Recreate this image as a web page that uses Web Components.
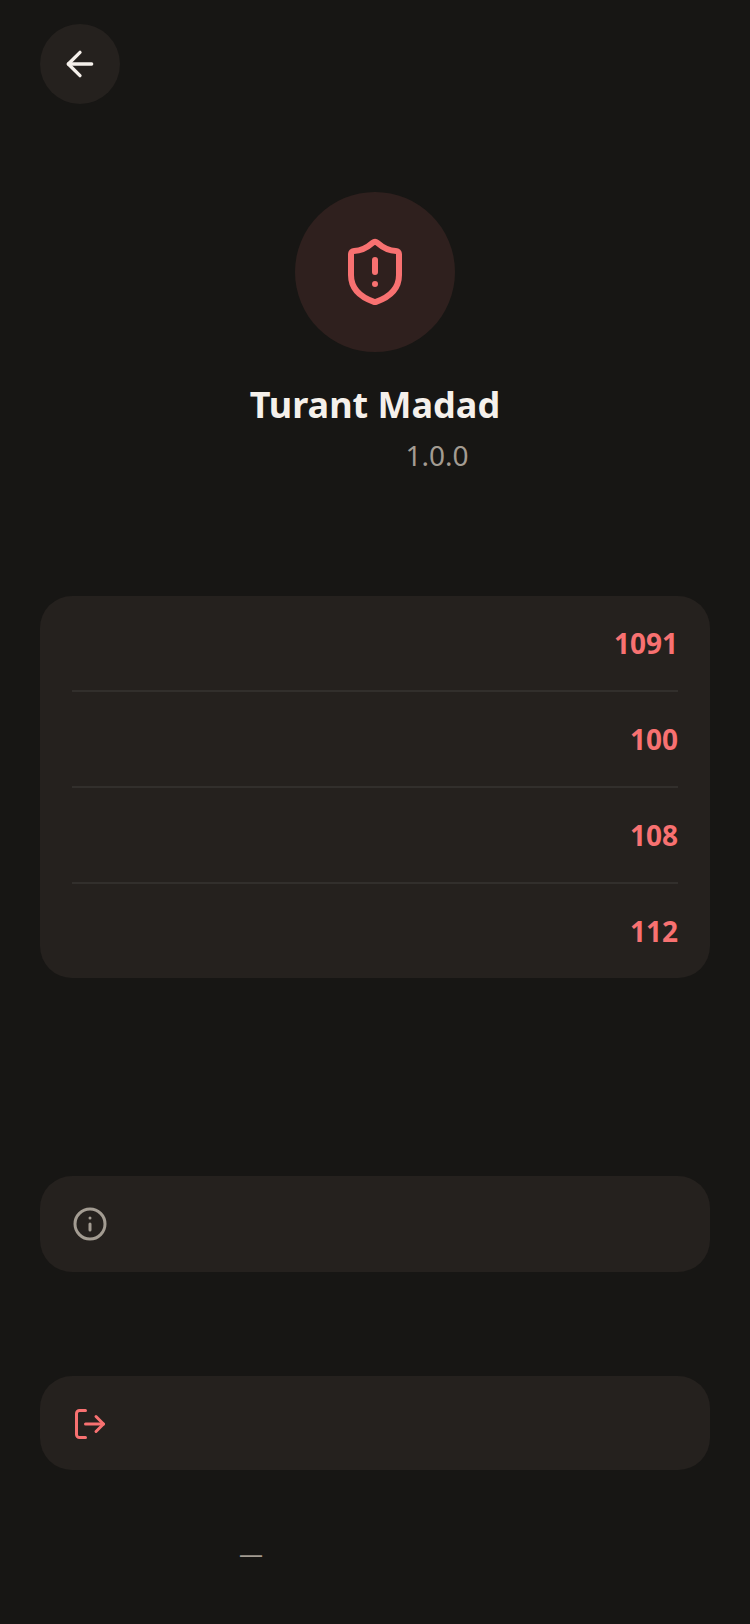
<!DOCTYPE html>
<html lang="en">
<head>
<meta charset="UTF-8">
<meta name="viewport" content="width=device-width, initial-scale=1">
<title>Turant Madad</title>
<style>
  body {
    margin: 0;
    background: #171614;
  }
</style>
</head>
<body>
<about-screen></about-screen>

<script>
/*
 * Line icons, all on a 24 unit grid
 */
const ICONS = {
  back: '<path d="m12 19-7-7 7-7"/><path d="M19 12H5"/>',
  shield: '<path d="M20 13c0 5-3.5 7.5-7.66 8.95a1 1 0 0 1-.67-.01C7.5 20.5 4 18 4 13V6a1 1 0 0 1 1-1c2 0 4.5-1.2 6.24-2.72a1.17 1.17 0 0 1 1.52 0C14.51 3.81 17 5 19 5a1 1 0 0 1 1 1z"/><path d="M12 8v4"/><path d="M12 16h.01"/>',
  info: '<circle cx="12" cy="12" r="10"/><path d="M12 16v-4"/><path d="M12 8h.01"/>',
  logout: '<path d="M9 21H5a2 2 0 0 1-2-2V5a2 2 0 0 1 2-2h4"/><path d="m16 17 5-5-5-5"/><path d="M21 12H9"/>'
};

class LineIcon extends HTMLElement {
  constructor(){
    super();
    this.attachShadow({mode: 'open'});
  }

  connectedCallback(){
    this.shadowRoot.innerHTML = `
    <style>
      :host { display: block; width: var(--icon-size, 36px); height: var(--icon-size, 36px); }
      svg { display: block; width: 100%; height: 100%; }
    </style>
    <svg viewBox="0 0 24 24" fill="none" stroke="currentColor" stroke-width="2"
      stroke-linecap="round" stroke-linejoin="round" aria-hidden="true">${ICONS[this.getAttribute('name')]}</svg>
    `;
  }
}

//Round back button in the top bar
class BackButton extends HTMLElement {
  constructor(){
    super();
    this.attachShadow({mode: 'open'});
  }

  connectedCallback(){
    this.shadowRoot.innerHTML = `
    <style>
      :host { display: block; --icon-size: 40px; }
      button {
        display: grid;
        place-items: center;
        width: 80px;
        height: 80px;
        padding: 0;
        border: none;
        border-radius: 50%;
        background: #25211e;
        color: #f5f0eb;
        cursor: pointer;
      }
    </style>
    <button type="button" aria-label="Back"><line-icon name="back"></line-icon></button>
    `;
    this.shadowRoot.querySelector("button").addEventListener("click", () => history.back());
  }
}

//Badge, app name and version
class AppHero extends HTMLElement {
  constructor(){
    super();
    this.attachShadow({mode: 'open'});
  }

  connectedCallback(){
    this.shadowRoot.innerHTML = `
    <style>
      :host { display: flex; flex-direction: column; align-items: center; }
      .badge {
        display: grid;
        place-items: center;
        width: 160px;
        height: 160px;
        border-radius: 50%;
        background: #2f201e;
        color: #f87171;
        --icon-size: 72px;
      }
      h1 { margin: 28px 0 0; font-size: 36px; line-height: 50px; font-weight: 700; }
      p { display: flex; margin: 6px 0 0; font-size: 28px; line-height: 38px; color: #a39c92; }
      .label { width: 124px; }
    </style>
    <div class="badge"><line-icon name="shield"></line-icon></div>
    <h1><slot></slot></h1>
    <p><span class="label"></span><slot name="version"></slot></p>
    `;
  }
}

//Card that holds the helpline rows
class HelplineCard extends HTMLElement {
  constructor(){
    super();
    this.attachShadow({mode: 'open'});
  }

  connectedCallback(){
    this.shadowRoot.innerHTML = `
    <style>
      :host {
        display: block;
        padding: 0 32px;
        border-radius: 32px;
        background: #25211e;
      }
      ::slotted(:not(:last-child)) { border-bottom: 2px solid #322f2c; }
    </style>
    <slot></slot>
    `;
  }
}

class HelplineRow extends HTMLElement {
  constructor(){
    super();
    this.attachShadow({mode: 'open'});
  }

  connectedCallback(){
    const number = this.getAttribute("number");
    this.shadowRoot.innerHTML = `
    <style>
      :host { display: flex; justify-content: space-between; padding: 28px 0; }
      a {
        font-size: 28px;
        line-height: 38px;
        font-weight: 700;
        color: #f87171;
        text-decoration: none;
      }
    </style>
    <span><slot></slot></span>
    <a href="tel:${number}">${number}</a>
    `;
  }
}

//Full width button with a leading icon
class ActionCard extends HTMLElement {
  constructor(){
    super();
    this.attachShadow({mode: 'open'});
  }

  connectedCallback(){
    this.shadowRoot.innerHTML = `
    <style>
      :host { display: block; color: #a39c92; }
      :host([danger]) { color: #f87171; }
      button {
        display: flex;
        align-items: center;
        gap: 24px;
        width: 100%;
        padding: 30px 32px;
        border: none;
        border-radius: 32px;
        background: #25211e;
        color: inherit;
        font: inherit;
        cursor: pointer;
      }
      :host([danger]) button { padding-bottom: 28px; }
    </style>
    <button type="button" aria-label="${this.getAttribute('label')}">
      <line-icon name="${this.getAttribute('icon')}"></line-icon>
      <slot></slot>
    </button>
    `;
  }
}

class AboutScreen extends HTMLElement {
  constructor(){
    super();
    this.attachShadow({mode: 'open'});
  }

  connectedCallback(){
    this.shadowRoot.innerHTML = `
    <style>${this.getStyle()}</style>
    <header><back-button></back-button></header>
    <main>
      <app-hero>Turant Madad<span slot="version">1.0.0</span></app-hero>
      <helpline-card>
        <helpline-row number="1091"></helpline-row>
        <helpline-row number="100"></helpline-row>
        <helpline-row number="108"></helpline-row>
        <helpline-row number="112"></helpline-row>
      </helpline-card>
      <action-card class="about" icon="info" label="About"></action-card>
      <action-card class="logout" icon="logout" label="Log out" danger></action-card>
    </main>
    <footer><span class="before"></span>—<span class="after"></span></footer>
    `;
  }

  getStyle(){
    return `
      :host {
        display: block;
        box-sizing: border-box;
        min-height: 100vh;
        padding: 24px 40px 48px;
        font-family: "Noto Sans", "Open Sans", sans-serif;
        color: #f5f0eb;
      }
      main { display: flex; flex-direction: column; padding-top: 88px; }
      helpline-card { margin-top: 122px; }
      .about { margin-top: 198px; }
      .logout { margin-top: 104px; }
      footer {
        display: flex;
        justify-content: center;
        margin-top: 64px;
        font-size: 24px;
        line-height: 38px;
        color: #a39c92;
      }
      .before { width: 120px; }
      .after { width: 368px; }
    `;
  }
}

//Register custom elements with the browser
customElements.define('line-icon', LineIcon);
customElements.define('back-button', BackButton);
customElements.define('app-hero', AppHero);
customElements.define('helpline-card', HelplineCard);
customElements.define('helpline-row', HelplineRow);
customElements.define('action-card', ActionCard);
customElements.define('about-screen', AboutScreen);
</script>
</body>
</html>
